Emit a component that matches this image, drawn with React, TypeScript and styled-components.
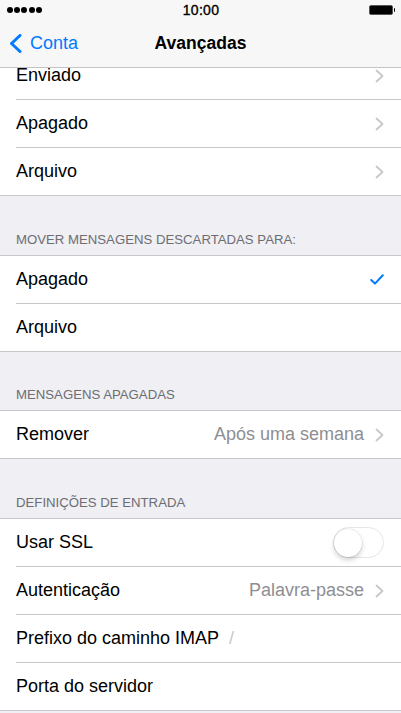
import * as React from 'react';
import styled, { createGlobalStyle } from 'styled-components';

const GlobalStyle = createGlobalStyle`
	html, body {
		margin: 0;
		padding: 0;
		background: #efeff4;
	}
	body {
		font-family: "Liberation Sans", Arial, sans-serif;
		-webkit-font-smoothing: antialiased;
	}
`;

const Screen = styled.div`
	display: flex;
	flex-direction: column;
	width: 401px;
	height: 713px;
	overflow: hidden;
	background: #efeff4;
`;

const TopBar = styled.header`
	position: relative;
	z-index: 1;
	flex-shrink: 0;
	background: #f7f7f7;
	border-bottom: 1px solid #c4c4c6;
`;

const StatusBar = styled.div`
	display: grid;
	grid-template-columns: 1fr auto 1fr;
	align-items: center;
	height: 20px;
	padding: 0 6px 0 7px;
`;

const Signal = styled.div`
	display: flex;
	gap: 1.2px;
`;

const Dot = styled.span`
	width: 6px;
	height: 6px;
	border-radius: 50%;
	background: #000;
`;

const Clock = styled.span`
	font-size: 14px;
	font-weight: normal;
	-webkit-text-stroke: 0.35px #000;
	color: #000;
	letter-spacing: 0.3px;
`;

const Battery = styled.div`
	justify-self: end;
	display: flex;
	align-items: center;
`;

const BatteryBody = styled.span`
	width: 22px;
	height: 8px;
	border: 1px solid #555;
	border-radius: 2px;
	background: #000;
`;

const BatteryNub = styled.span`
	width: 1.5px;
	height: 4px;
	margin-left: 0.5px;
	background: #000;
	border-radius: 0 1px 1px 0;
`;

const NavBar = styled.nav`
	display: grid;
	grid-template-columns: 1fr auto 1fr;
	align-items: center;
	height: 47px;
`;

const BackButton = styled.div`
	display: flex;
	align-items: center;
	gap: 8px;
	padding-left: 9px;
	color: #007aff;
	font-size: 18px;
`;

const Title = styled.h1`
	margin: 0;
	font-size: 17.5px;
	font-weight: bold;
	color: #000;
`;

const Content = styled.main`
	flex: 1;
	overflow: hidden;
`;

const Scroller = styled.div`
	margin-top: -17px;
`;

const SectionHeader = styled.div<{ $height?: number }>`
	display: flex;
	align-items: flex-end;
	height: ${(p) => p.$height ?? 59}px;
	box-sizing: border-box;
	padding: 0 16px 7px;
	font-size: 13.2px;
	line-height: 16px;
	color: #6d6d72;
	text-transform: uppercase;
`;

const Group = styled.section`
	background: #fff;
	border-top: 1px solid #c8c7cc;
	border-bottom: 1px solid #c8c7cc;
`;

const Row = styled.div`
	padding-left: 16px;

	& + & > div {
		border-top: 1px solid #c8c7cc;
	}
`;

const RowBody = styled.div`
	display: flex;
	align-items: center;
	height: 47px;
	padding-right: 17px;
	font-size: 18px;
	color: #000;
`;

const Label = styled.span`
	flex-shrink: 0;
`;

const Value = styled.span`
	margin-left: auto;
	margin-right: 11px;
	color: #8e8e93;
`;

const Field = styled.span`
	margin-left: 10px;
	color: #c7c7cd;
`;

const Trailing = styled.span`
	display: flex;
	align-items: center;
	margin-left: auto;
`;

const Track = styled.div`
	display: flex;
	align-items: center;
	width: 51px;
	height: 31px;
	box-sizing: border-box;
	border: 1.5px solid #e5e5ea;
	border-radius: 16px;
	background: #fff;
	margin-left: auto;
`;

const Knob = styled.span`
	width: 28px;
	height: 28px;
	border-radius: 50%;
	background: #fff;
	box-shadow: 0 3px 5px rgba(0, 0, 0, 0.18), 0 0 0 0.5px rgba(0, 0, 0, 0.12);
`;

const Chevron = () => (
	<svg width='9' height='14' viewBox='0 0 9 14'>
		<path d='M1.5 1.5 L7.5 7 L1.5 12.5' fill='none' stroke='#c7c7cc' strokeWidth='1.8' strokeLinecap='round' strokeLinejoin='round' />
	</svg>
);

const BackChevron = () => (
	<svg width='13' height='19' viewBox='0 0 13 19'>
		<path d='M11 1.5 L2.5 9.5 L11 17.5' fill='none' stroke='#007aff' strokeWidth='3' strokeLinecap='round' strokeLinejoin='round' />
	</svg>
);

const Check = () => (
	<svg width='14' height='11' viewBox='0 0 14 11'>
		<path d='M1.2 6 L5 9.6 L12.8 1.2' fill='none' stroke='#007aff' strokeWidth='2' strokeLinecap='round' strokeLinejoin='round' />
	</svg>
);

interface SettingRowProps {
	label: string;
	value?: string;
	field?: string;
	chevron?: boolean;
	checked?: boolean;
	toggle?: boolean;
}

const SettingRow = ({ label, value, field, chevron, checked, toggle }: SettingRowProps) => (
	<Row>
		<RowBody>
			<Label>{label}</Label>
			{field !== undefined && <Field>{field}</Field>}
			{value && <Value>{value}</Value>}
			{chevron && (value ? <Chevron /> : <Trailing><Chevron /></Trailing>)}
			{checked && <Trailing><Check /></Trailing>}
			{toggle && <Track><Knob /></Track>}
		</RowBody>
	</Row>
);

const App = () => {
	return (
		<Screen>
			<GlobalStyle />
			<TopBar>
				<StatusBar>
					<Signal>
						{[0, 1, 2, 3, 4].map((i) => <Dot key={i} />)}
					</Signal>
					<Clock>10:00</Clock>
					<Battery>
						<BatteryBody />
						<BatteryNub />
					</Battery>
				</StatusBar>
				<NavBar>
					<BackButton>
						<BackChevron />
						<span>Conta</span>
					</BackButton>
					<Title>Avançadas</Title>
					<div />
				</NavBar>
			</TopBar>
			<Content>
				<Scroller>
					<Group>
						<SettingRow label='Enviado' chevron />
						<SettingRow label='Apagado' chevron />
						<SettingRow label='Arquivo' chevron />
					</Group>
					<SectionHeader>Mover mensagens descartadas para:</SectionHeader>
					<Group>
						<SettingRow label='Apagado' checked />
						<SettingRow label='Arquivo' />
					</Group>
					<SectionHeader $height={58}>Mensagens apagadas</SectionHeader>
					<Group>
						<SettingRow label='Remover' value='Após uma semana' chevron />
					</Group>
					<SectionHeader>Definições de entrada</SectionHeader>
					<Group>
						<SettingRow label='Usar SSL' toggle />
						<SettingRow label='Autenticação' value='Palavra-passe' chevron />
						<SettingRow label='Prefixo do caminho IMAP' field='/' />
						<SettingRow label='Porta do servidor' />
					</Group>
				</Scroller>
			</Content>
		</Screen>
	);
};

export default App;
